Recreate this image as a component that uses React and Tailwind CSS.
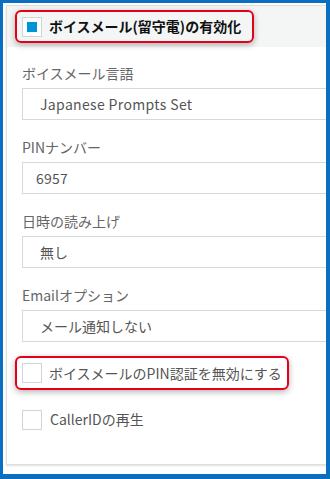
import React, { useState } from "react";

const font = { fontFamily: '"Noto Sans CJK JP", "Noto Sans", sans-serif' };

const Check = ({ checked }) => (
  <span className="flex h-[20px] w-[20px] shrink-0 items-center justify-center border border-[#cfd6d8] bg-white">
    {checked && <span className="h-[10px] w-[10px] bg-[#0093d5]" />}
  </span>
);

const Field = ({ label, value, pad = "pl-[17px]", size = "text-[14px]" }) => (
  <div className="mb-[17px] flex flex-col gap-[5px]">
    <div className="h-[20px] text-[14px] leading-[20px] text-[#666]">{label}</div>
    <div
      className={`flex h-[32px] items-center border border-[#d3dadc] bg-white ${pad} ${size} text-[#555]`}
    >
      {value}
    </div>
  </div>
);

const VoicemailSettings = () => {
  const [enabled] = useState(true);

  return (
    <div
      style={font}
      className="h-[479px] w-[330px] overflow-hidden border-t-[3px] border-l-[3px] border-r-[4px] border-b-[5px] border-[#0a6fc0] bg-white pt-[2px] pl-[3px]"
    >
      <div className="h-[460px] w-[340px] border-t border-l border-b border-[#dcdfe0] shadow-[0_1px_2px_rgba(0,0,0,0.12)]">
        {/* header */}
        <div className="h-[41px] bg-[#f4f6f6] pt-[4px] pl-[8px]">
          <div className="flex h-[33px] w-[239px] items-center gap-[7px] rounded-[6px] border-2 border-[#e5001a] pl-[5px] shadow-[0_2px_6px_rgba(0,0,0,0.3)]">
            <Check checked={enabled} />
            <span className="text-[14px] font-bold text-[#111]">
              ボイスメール(留守電)の有効化
            </span>
          </div>
        </div>

        {/* body */}
        <div className="pt-[16px] pl-[15px]">
          <Field
            label="ボイスメール言語"
            value={<span className="tracking-[0.35px]">Japanese Prompts Set</span>}
          />
          <Field
            label="PINナンバー"
            value={<span className="tracking-[0.2px]">6957</span>}
            pad="pl-[13px]"
          />
          <Field label="日時の読み上げ" value="無し" />
          <Field label="Emailオプション" value="メール通知しない" />

          <div className="-ml-[7px] mt-[-3px] flex h-[34px] w-[274px] items-center gap-[7px] rounded-[6px] border-2 border-[#e5001a] pl-[5px] shadow-[0_2px_6px_rgba(0,0,0,0.3)]">
            <Check />
            <span className="text-[14px] text-[#555]">ボイスメールのPIN認証を無効にする</span>
          </div>

          <div className="mt-[19px] flex items-center gap-[8px]">
            <Check />
            <span className="text-[14px] text-[#555]">CallerIDの再生</span>
          </div>
        </div>
      </div>
    </div>
  );
};

export default VoicemailSettings;
